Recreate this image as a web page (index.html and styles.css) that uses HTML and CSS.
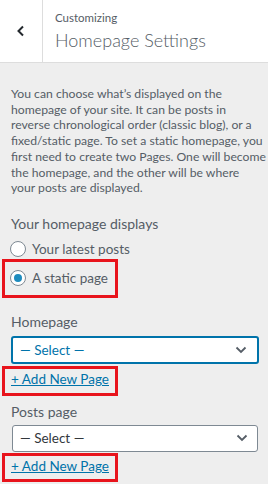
FILE: index.html
```html
<!DOCTYPE html>
<html lang="en">
<head>
  <meta charset="UTF-8" />
  <meta name="viewport" content="width=device-width, initial-scale=1.0"/>
  <title>Homepage Settings</title>
  <link rel="stylesheet" href="styles.css">
</head>
<body>
  <div class="panel-header">
    <button class="back-btn" aria-label="Back">
      <svg width="10" height="12" viewBox="0 0 10 12"><path d="M7 1.5 L2.5 6 L7 10.5" fill="none" stroke="#23282d" stroke-width="2"/></svg>
    </button>
    <div class="panel-title">
      <span class="crumb">Customizing</span>
      <h1>Homepage Settings</h1>
    </div>
  </div>

  <div class="panel-body">
    <p class="description">You can choose what’s displayed on the<br>homepage of your site. It can be posts in<br>reverse chronological order (classic blog), or a<br>fixed/static page. To set a static homepage, you<br>first need to create two Pages. One will become<br>the homepage, and the other will be where<br>your posts are displayed.</p>

    <div class="control control-radio">
      <span class="control-title">Your homepage displays</span>
      <label class="radio-row"><input type="radio" name="show_on_front"> Your latest posts</label>
      <div class="highlight hl-radio">
        <label class="radio-row"><input type="radio" name="show_on_front" checked> A static page</label>
      </div>
    </div>

    <div class="control">
      <span class="control-title">Homepage</span>
      <div class="select focused">— Select —<svg width="12" height="8" viewBox="0 0 12 8"><path d="M1.5 1.5 L6 6 L10.5 1.5" fill="none" stroke="#555d66" stroke-width="1.8"/></svg></div>
      <div class="highlight hl-link"><a class="add-link" href="#">+ Add New Page</a></div>
    </div>

    <div class="control">
      <span class="control-title">Posts page</span>
      <div class="select">— Select —<svg width="12" height="8" viewBox="0 0 12 8"><path d="M1.5 1.5 L6 6 L10.5 1.5" fill="none" stroke="#555d66" stroke-width="1.8"/></svg></div>
      <div class="highlight hl-link"><a class="add-link" href="#">+ Add New Page</a></div>
    </div>
  </div>
</body>
</html>
```

FILE: styles.css
```css
body {
  margin: 0;
  font-family: 'Lato', 'Open Sans', sans-serif;
  background: #eeeeee;
  color: #555d66;
  overflow: hidden;
}

.panel-header {
  display: flex;
  height: 62px;
  background: #fff;
  border-bottom: 1px solid #dddddd;
}

.back-btn {
  width: 43px;
  border: none;
  border-right: 1px solid #dddddd;
  background: #fff;
  display: flex;
  align-items: center;
  justify-content: center;
  padding: 0;
  margin: 0;
}

.panel-title {
  padding: 10px 0 0 12px;
}

.crumb {
  display: block;
  font-size: 11.5px;
  color: #555d66;
  line-height: 16px;
}

.panel-title h1 {
  margin: 0;
  font-size: 18px;
  font-weight: 300;
  color: #555d66;
  line-height: 28px;
}

.panel-body {
  padding: 23px 8px 0 11px;
}

.description {
  margin: 0 0 18px;
  font-size: 12.2px;
  line-height: 15.7px;
  white-space: nowrap;
}

.control {
  margin-bottom: 6px;
}

.control-radio {
  margin-bottom: 14px;
}

.control-title {
  display: block;
  font-size: 14px;
  line-height: 20px;
  margin-bottom: 2px;
}

.radio-row {
  display: flex;
  align-items: center;
  gap: 6px;
  font-size: 13.5px;
  height: 26px;
}

.radio-row input {
  appearance: none;
  margin: 0 0 0 -1px;
  width: 16px;
  height: 16px;
  border: 1px solid #7e8993;
  border-radius: 50%;
  background: #fff;
  display: flex;
  align-items: center;
  justify-content: center;
}

.radio-row input:checked::before {
  content: "";
  width: 8px;
  height: 8px;
  border-radius: 50%;
  background: #1e8cbe;
}

.highlight {
  border: 3px solid #e8141c;
  margin-left: -9px;
  padding-left: 6px;
  width: 104px;
}

.hl-radio {
  margin-top: -3px;
  padding-top: 3px;
  padding-bottom: 4px;
}

.select {
  display: flex;
  align-items: center;
  justify-content: space-between;
  height: 25px;
  margin: 3px 2px 0 1px;
  border: 1px solid #7e8993;
  border-radius: 3px;
  background: #fff;
  padding: 0 9px 0 7px;
  font-size: 13.5px;
  color: #32373c;
}

.select.focused {
  border: 2px solid #0073aa;
  height: 24px;
  margin: 4px 1px 0 0;
  color: #0073aa;
  padding-left: 7px;
  padding-right: 10px;
}

.hl-link {
  height: 23px;
  margin-top: 1px;
}

.focused + .hl-link {
  margin-top: 2px;
  height: 24px;
}

.add-link {
  display: block;
  font-size: 13.5px;
  color: #0073aa;
  line-height: 20px;
}
```
